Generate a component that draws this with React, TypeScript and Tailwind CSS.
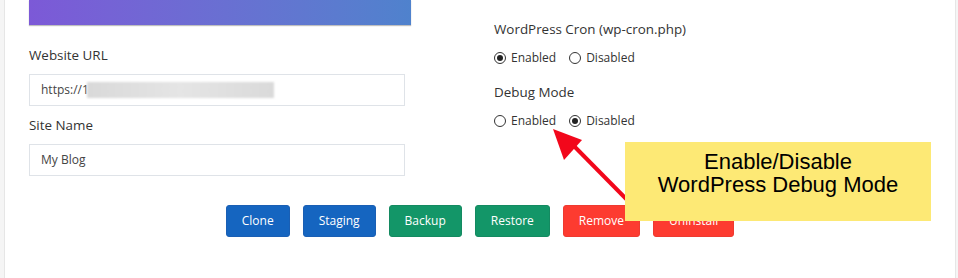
import React from 'react';

interface RadioOption {
  label: string;
  checked: boolean;
}

interface ActionButton {
  label: string;
  className: string;
}

const ACTIONS: ActionButton[] = [
  { label: 'Clone', className: 'bg-[#1565c0] border-[#1a5fb4]' },
  { label: 'Staging', className: 'bg-[#1565c0] border-[#1a5fb4]' },
  { label: 'Backup', className: 'bg-[#139668] border-[#148a61]' },
  { label: 'Restore', className: 'bg-[#139668] border-[#148a61]' },
  { label: 'Remove', className: 'bg-[#fd3b30] border-[#ee3a30]' },
  { label: 'Uninstall', className: 'bg-[#fd3b30] border-[#ee3a30]' },
];

const Radio: React.FC<RadioOption> = ({ label, checked }) => (
  <label className="flex items-center gap-[5px]">
    <span className="w-[12px] h-[12px] rounded-full border border-[#333] bg-white flex items-center justify-center">
      {checked && <span className="w-[6px] h-[6px] rounded-full bg-[#222]" />}
    </span>
    <span className="text-[12px] text-[#333]">{label}</span>
  </label>
);

const RadioGroup: React.FC<{ title: string; options: RadioOption[] }> = ({ title, options }) => (
  <div>
    <div className="text-[13.4px] leading-[18px] text-[#333]">{title}</div>
    <div className="flex items-center gap-[13px] mt-[11px] h-[18px]">
      {options.map((o) => (
        <Radio key={o.label} {...o} />
      ))}
    </div>
  </div>
);

const Field: React.FC<{ label: string; children: React.ReactNode }> = ({ label, children }) => (
  <div>
    <div className="text-[13.4px] leading-[18px] text-[#333]">{label}</div>
    <div className="mt-[10px] h-[32px] w-[376px] border border-[#dfe3e8] bg-white flex items-center pl-[11px] text-[12px] text-[#444]">
      {children}
    </div>
  </div>
);

export default function App() {
  return (
    <div
      className="w-[958px] h-[278px] bg-[#f5f5f5] pl-[4px] pr-[2px] overflow-hidden relative"
      style={{ fontFamily: '"Open Sans", "Noto Sans", sans-serif' }}
    >
      <div className="h-full bg-white border-x border-[#e6e6e6] relative">
        {/* form columns */}
        <div className="flex">
          <div className="pl-[24px] w-[489px]">
            <div className="h-[25px] w-[382px] bg-gradient-to-r from-[#7c59d7] to-[#4f82cd] shadow-[0_1px_1px_rgba(0,0,0,0.25)]" />
            <div className="mt-[21px]">
              <Field label="Website URL">
                <span>https://1</span>
                <span className="inline-block w-[187px] h-[16px] -ml-[2px] bg-gradient-to-r from-[#d9d9d9] via-[#e5e5e5] to-[#dadada] blur-[1px]" />
              </Field>
            </div>
            <div className="mt-[10px]">
              <Field label="Site Name">
                <span>My Blog</span>
              </Field>
            </div>
          </div>
          <div className="pt-[20px] flex flex-col gap-[15px]">
            <RadioGroup
              title="WordPress Cron (wp-cron.php)"
              options={[
                { label: 'Enabled', checked: true },
                { label: 'Disabled', checked: false },
              ]}
            />
            <div className="pt-[1px]">
              <RadioGroup
                title="Debug Mode"
                options={[
                  { label: 'Enabled', checked: false },
                  { label: 'Disabled', checked: true },
                ]}
              />
            </div>
          </div>
        </div>

        {/* action buttons */}
        <div className="flex justify-center gap-[13px] mt-[29px]">
          {ACTIONS.map((a) => (
            <button
              key={a.label}
              className={`h-[32px] px-[15px] rounded-[3px] border text-white text-[12px] ${a.className}`}
            >
              {a.label}
            </button>
          ))}
        </div>

        {/* annotation arrow */}
        <svg
          className="absolute left-[545px] top-[120px] pointer-events-none"
          width="110"
          height="110"
          viewBox="0 0 110 110"
        >
          <line x1="20" y1="22" x2="95" y2="98" stroke="#f2071b" strokeWidth="4" />
          <polygon points="3,9 32,20 14,40" fill="#f2071b" />
        </svg>

        {/* annotation callout */}
        <div
          className="absolute left-[620px] top-[142px] w-[306px] h-[79px] bg-[#fde975] pt-[8px] text-center text-black text-[22px] leading-[23px]"
          style={{ fontFamily: '"Liberation Sans", Arial, sans-serif' }}
        >
          <div>Enable/Disable</div>
          <div>WordPress Debug Mode</div>
        </div>
      </div>
    </div>
  );
}
